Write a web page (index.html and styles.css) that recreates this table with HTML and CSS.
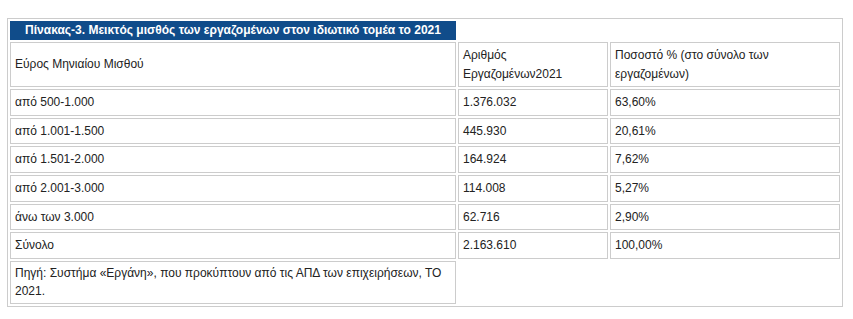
FILE: index.html
```html
<!DOCTYPE html>
<html lang="el">
<head>
<meta charset="utf-8">
<title>Πίνακας-3</title>
<link rel="stylesheet" href="styles.css">
</head>
<body>
<div class="page">
<table class="data">
  <colgroup>
    <col class="c1"><col class="c2"><col class="c3">
  </colgroup>
  <tr><td class="title">Πίνακας-3. Μεικτός μισθός των εργαζομένων στον ιδιωτικό τομέα το 2021</td></tr>
  <tr class="head"><td>Εύρος Μηνιαίου Μισθού</td><td>Αριθμός Εργαζομένων2021</td><td>Ποσοστό % (στο σύνολο των εργαζομένων)</td></tr>
  <tr><td>από 500-1.000</td><td>1.376.032</td><td>63,60%</td></tr>
  <tr><td>από 1.001-1.500</td><td>445.930</td><td>20,61%</td></tr>
  <tr><td>από 1.501-2.000</td><td>164.924</td><td>7,62%</td></tr>
  <tr><td>από 2.001-3.000</td><td>114.008</td><td>5,27%</td></tr>
  <tr><td>άνω των 3.000</td><td>62.716</td><td>2,90%</td></tr>
  <tr><td>Σύνολο</td><td>2.163.610</td><td>100,00%</td></tr>
  <tr class="src"><td>Πηγή: Συστήμα «Εργάνη», που προκύπτουν από τις ΑΠΔ των επιχειρήσεων, ΤΟ 2021.</td></tr>
</table>
</div>
</body>
</html>
```

FILE: styles.css
```css
html, body {
  margin: 0;
  padding: 0;
  background: #fff;
}
.page {
  padding: 18px 7px 0 7px;
  font-family: "Liberation Sans", Arial, sans-serif;
  font-size: 12px;
  color: #222;
}
.data {
  table-layout: fixed;
  width: 836px;
  border-collapse: separate;
  border-spacing: 2px;
  border: 1px solid #cccccc;
}
.c1 { width: 446px; }
.c2 { width: 150px; }
.c3 { width: 230px; }
.data td {
  border: 1px solid #cccccc;
  padding: 3px 4px 3px 4px;
  line-height: 18.67px;
  vertical-align: middle;
  text-align: left;
}
.data .head td {
  line-height: 18.5px;
}
.data .src td {
  line-height: 17.5px;
}
.data td.title {
  background: #104c8a;
  border-color: #104c8a;
  color: #fff;
  font-weight: bold;
  text-align: center;
  padding: 0 4px;
  line-height: 17px;
}
```
